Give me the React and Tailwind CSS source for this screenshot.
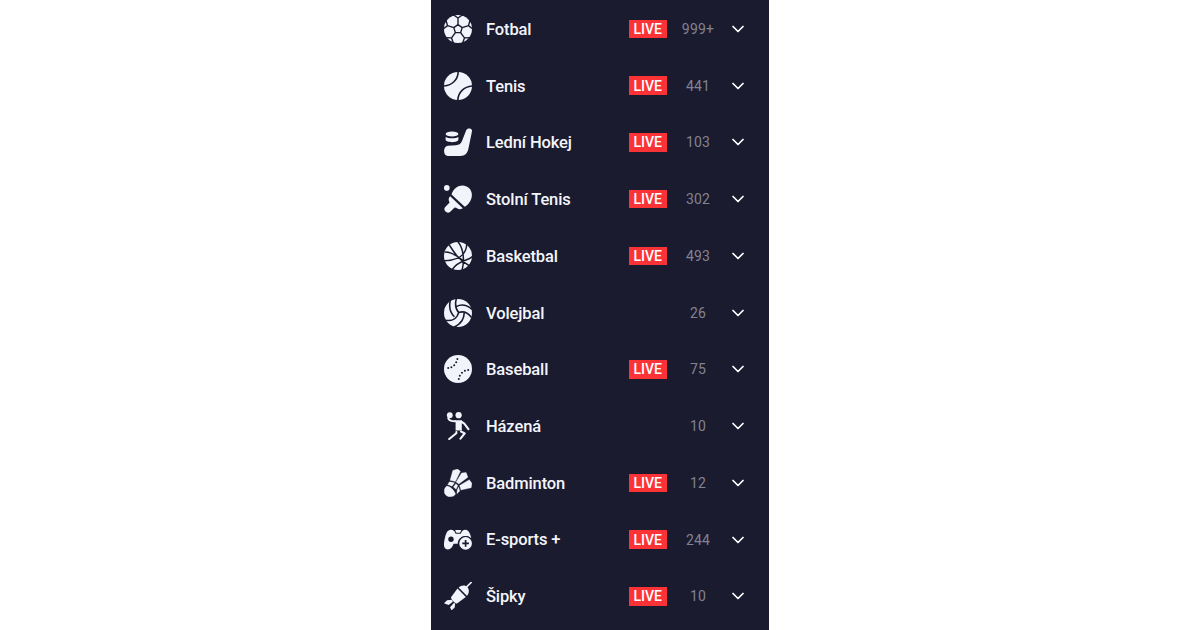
import { ChevronDown } from 'lucide-react'

const INK = '#1b1b30'

const icons = {
  football: (
    <>
      <circle cx="14" cy="14" r="14" />
      <g fill="none" stroke={INK} strokeWidth="1.4" strokeLinejoin="round">
        <path d="M14 9.6 18.2 12.6 16.6 17.6H11.4L9.8 12.6Z" />
        {[0, 72, 144, 216, 288].map((angle) => (
          <path key={angle} d="M14 9.6V3M14 3 9.2-.3M14 3 18.8-.3" transform={`rotate(${angle} 14 14)`} />
        ))}
      </g>
    </>
  ),
  tennis: (
    <>
      <circle cx="14" cy="14" r="14" />
      <path d="M14.2-.5C14 7.5 8.5 13.5-.5 14M28.5 14C20 14.5 14 20.5 13.8 28.5" fill="none" stroke={INK} strokeWidth="1.6" />
    </>
  ),
  hockey: (
    <>
      <ellipse cx="8" cy="6" rx="6.4" ry="2.4" />
      <path d="M1.6 8.9C4.5 10.6 11.5 10.6 14.4 8.9V11.6C14.4 15.1 1.6 15.1 1.6 11.6Z" />
      <path d="M22.3 2C23.1-.4 28.5-.1 28 3.2L24.4 20.8C23.3 25.7 20.5 27.9 16.5 27.9H4C-1.2 27.9-1.2 18 4 17.8L12 17.2C15 16.9 16.7 16 17.8 13.5Z" />
    </>
  ),
  tableTennis: (
    <>
      <circle cx="2.8" cy="2.9" r="2.8" />
      <path d="M7.5 9.5C10.5-.2 20-1.5 25 3 30.2 8 28 17.7 20.7 21.8Z" />
      <path d="M6.2 11.2 18.8 23.2C16.5 24.7 14 24.4 12.2 22.8L10.6 22.5 6 27.1C2.8 29.4-1.2 25.2 1 22.2L5.6 17.5C4.2 15.3 4.4 13 6.2 11.2Z" />
    </>
  ),
  basketball: (
    <>
      <circle cx="14" cy="14" r="14" />
      <path
        d="M5 2.5C9.5 9.5 14.5 18 25 23.5M13.8-.5C20 7 20.5 19 18 28.5M22.8 2C22 15.5 11.5 18.5-.5 18.8M28.5 14.5C24 19.5 14.5 17.5 8 28M.5 10C8 9.5 14 14.5 18.5 18.2"
        fill="none"
        stroke={INK}
        strokeWidth="1.5"
      />
    </>
  ),
  volleyball: (
    <>
      <circle cx="14" cy="14" r="14" />
      <path
        d="M12.4-.5C11 4.5 11.3 9.5 14.6 13.6M6.2 1.8C5 7.5 6 13.5 10.4 17.8M12.3 7.6C17.5 4.8 23 6 28 10.4M14.6 13.6C19.5 11.8 24 13.8 27.6 18.5M14.6 13.6C13 19.5 8 22.3 1.5 21.3M20 13.2C20.8 19 17 25 10 28.3"
        fill="none"
        stroke={INK}
        strokeWidth="1.6"
      />
    </>
  ),
  baseball: (
    <>
      <circle cx="14" cy="14" r="14" />
      <g fill={INK}>
        <circle cx="4.2" cy="13" r="1" />
        <circle cx="7.4" cy="12.2" r="1" />
        <circle cx="10.2" cy="10.3" r="1" />
        <circle cx="12.2" cy="7.3" r="1" />
        <circle cx="13.4" cy="4" r="1" />
        <circle cx="14.8" cy="24" r="1" />
        <circle cx="15.8" cy="20.7" r="1" />
        <circle cx="18" cy="17.8" r="1" />
        <circle cx="20.9" cy="15.8" r="1" />
        <circle cx="24.2" cy="15" r="1" />
      </g>
    </>
  ),
  handball: (
    <>
      <circle cx="5.8" cy="3.2" r="2.9" />
      <circle cx="14.6" cy="3.2" r="3.1" />
      <path d="M10.3 8.2H16.8C18.3 8.2 18.6 9.4 17.8 10.6V18.6H11.6V10.5Z" />
      <path
        d="M4.3 6.2C5 8.4 7.4 9.3 11 9.3M17 9.5 20.3 11.6 24.4 17.2M12.4 20 12.3 21.2 5.2 27M17 19.5 20.7 21.4 16.5 26.7"
        fill="none"
        stroke="currentColor"
        strokeWidth="2.1"
        strokeLinecap="round"
        strokeLinejoin="round"
      />
    </>
  ),
  badminton: (
    <g stroke="currentColor" strokeWidth="0.3" strokeLinejoin="round">
      <path d="M8.8 1.4 13.5.1 16.4 2.2 11.4 12.4 6.1 11.3Z" />
      <path d="M17.6 3.9 22.1 3.4 23.9 8.2 14.8 15 12.1 13Z" />
      <path d="M25.3 10.7 27.9 14.2 27.2 18.8 17 21 15.6 16.5Z" />
      <path d="M5.5 12.8 10.5 13.7 8 17.2 3.7 15.5ZM11.8 14.7 13.8 16.4 12.1 20.2 9.4 18ZM14.6 18 15.8 22.1 12.9 24.7 13.2 21Z" />
      <path d="M2.8 17.1C5.8 17.4 10 20.4 11.5 25.3 8.5 29.2 2.4 28.2.7 24.4-.4 21.8.5 18.8 2.8 17.1Z" />
    </g>
  ),
  gamepad: (
    <>
      <path d="M4.2 4.8C6.2 3.2 8.5 3.6 10 5H18.3C20 3.6 22.4 3.4 24.2 4.9 25.8 6.8 26.7 9.5 27.3 12.2 21.5 7.2 13.8 11 13.7 17.8H9.6C8.2 21.8 6.3 23.7 3.6 23.5-1 23-.5 17.8 1 11.5 1.8 8.4 2.6 6 4.2 4.8Z" />
      <rect x="11" y="4" width="6.4" height="2.6" rx="1" />
      <path d="M10.7 4.8 12 7.3H16.4L17.7 4.8" fill="none" stroke={INK} strokeWidth="1.1" />
      <circle cx="7" cy="13.2" r="2.7" fill={INK} />
      <circle cx="21.6" cy="17.4" r="7.3" fill={INK} />
      <circle cx="21.6" cy="17.4" r="6.3" />
      <path d="M21.6 14.1V20.7M18.3 17.4H24.9" stroke={INK} strokeWidth="1.7" />
    </>
  ),
  darts: (
    <>
      <path d="M22.6 4.8 27.2.5" stroke="currentColor" strokeWidth="1.6" strokeLinecap="round" />
      <path d="M14.6 5.5C17.2 2.9 21.5 2.8 23.5 5.2 25.5 7.6 25.2 11.4 22.9 13.8Z" />
      <path d="M13.5 6.6 21.8 15 13 21.6C11.2 21.6 7 17.5 7 15.2Z" />
      <path d="M0 21.2 3.1 18.2 8.1 17.8 8.9 19.7 4.6 23ZM6 25.3 9.8 20.9 11.2 21.4 10.7 25.4 7.5 28.4Z" />
    </>
  ),
}

const sports = [
  { name: 'Fotbal', icon: 'football', live: true, count: '999+' },
  { name: 'Tenis', icon: 'tennis', live: true, count: '441' },
  { name: 'Lední Hokej', icon: 'hockey', live: true, count: '103' },
  { name: 'Stolní Tenis', icon: 'tableTennis', live: true, count: '302' },
  { name: 'Basketbal', icon: 'basketball', live: true, count: '493' },
  { name: 'Volejbal', icon: 'volleyball', live: false, count: '26' },
  { name: 'Baseball', icon: 'baseball', live: true, count: '75' },
  { name: 'Házená', icon: 'handball', live: false, count: '10' },
  { name: 'Badminton', icon: 'badminton', live: true, count: '12' },
  { name: 'E-sports +', icon: 'gamepad', live: true, count: '244' },
  { name: 'Šipky', icon: 'darts', live: true, count: '10' },
]

function SportRow({ sport }) {
  return (
    <li className="flex h-[56.74px] items-center pl-[13px] pr-[20.7px]">
      <svg viewBox="0 0 28 28" fill="currentColor" className="h-7 w-7 shrink-0 overflow-hidden text-[#f1f4fb]">
        {icons[sport.icon]}
      </svg>
      <span className="ml-3.5 flex-1 whitespace-nowrap pt-[2.5px] text-[16.5px] font-medium tracking-[-0.12px] text-[#f4f5fa]">
        {sport.name}
      </span>
      {sport.live && (
        <span className="flex h-[18.5px] w-[37.5px] items-center justify-center bg-[#fb3337] pt-px text-[14px] font-medium text-white">
          LIVE
        </span>
      )}
      <span className="ml-[7.5px] w-12 pt-px text-center text-[14px] tracking-[0.2px] text-[#82838f]">{sport.count}</span>
      <ChevronDown className="ml-[6.3px] h-5 w-5 shrink-0 text-white" strokeWidth={2.1} />
    </li>
  )
}

export default function App() {
  return (
    <div className="flex h-[630px] justify-center overflow-hidden bg-white font-['Roboto',sans-serif]">
      <ul className="w-[338px] bg-[#1b1b30] pt-[0.6px]">
        {sports.map((sport) => (
          <SportRow key={sport.name} sport={sport} />
        ))}
      </ul>
    </div>
  )
}
